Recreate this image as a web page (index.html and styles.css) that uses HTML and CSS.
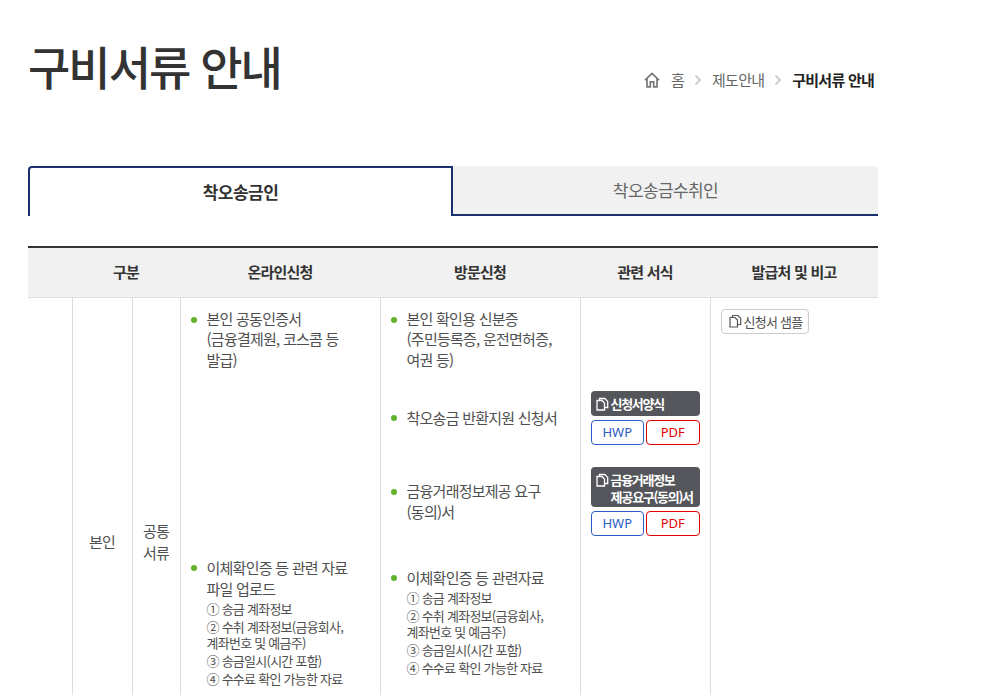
FILE: index.html
```html
<!DOCTYPE html>
<html lang="ko">
<head>
<meta charset="utf-8">
<title>구비서류 안내</title>
<link rel="stylesheet" href="styles.css">
</head>
<body>
<div class="page">
  <header class="head">
    <h1 class="title">구비서류 안내</h1>
    <nav class="crumbs">
      <svg class="home" viewBox="0 0 16 16" width="16" height="16"><path d="M1 8.200 8 1.400 15 8.200M3 6.600V14.800H6.300V9.800H9.700V14.800H13V6.600" fill="none" stroke="#777" stroke-width="1.700"/></svg>
      <span class="crumb">홈</span>
      <svg class="sep" viewBox="0 0 8 12" width="8" height="12"><path d="M1.500 1.500 6 6 1.500 10.500" fill="none" stroke="#ccc" stroke-width="1.800"/></svg>
      <span class="crumb">제도안내</span>
      <svg class="sep" viewBox="0 0 8 12" width="8" height="12"><path d="M1.500 1.500 6 6 1.500 10.500" fill="none" stroke="#ccc" stroke-width="1.800"/></svg>
      <span class="crumb current">구비서류 안내</span>
    </nav>
  </header>

  <div class="tabs">
    <div class="tab active">착오송금인</div>
    <div class="tab">착오송금수취인</div>
  </div>

  <table class="docs">
    <colgroup>
      <col class="c1"><col class="c2"><col class="c3"><col class="c4"><col class="c5"><col class="c6"><col class="c7">
    </colgroup>
    <thead>
      <tr>
        <th></th>
        <th colspan="2">구분</th>
        <th>온라인신청</th>
        <th>방문신청</th>
        <th>관련 서식</th>
        <th>발급처 및 비고</th>
      </tr>
    </thead>
    <tbody>
      <tr>
        <td class="ctr"></td>
        <td class="ctr">본인</td>
        <td class="ctr">공통<br>서류</td>
        <td class="top">
          <ul class="list online">
            <li class="item gap-a">본인 공동인증서<br>(금융결제원, 코스콤 등<br>발급)</li>
            <li class="item">이체확인증 등 관련 자료<br>파일 업로드
              <ol class="sub">
                <li>① 송금 계좌정보</li>
                <li>② 수취 계좌정보(금융회사,<br>계좌번호 및 예금주)</li>
                <li>③ 송금일시(시간 포함)</li>
                <li>④ 수수료 확인 가능한 자료</li>
              </ol>
            </li>
          </ul>
        </td>
        <td class="top">
          <ul class="list visit">
            <li class="item gap-b">본인 확인용 신분증<br>(주민등록증, 운전면허증,<br>여권 등)</li>
            <li class="item gap-c">착오송금 반환지원 신청서</li>
            <li class="item gap-d">금융거래정보제공 요구<br>(동의)서</li>
            <li class="item">이체확인증 등 관련자료
              <ol class="sub tight">
                <li>① 송금 계좌정보</li>
                <li>② 수취 계좌정보(금융회사,<br>계좌번호 및 예금주)</li>
                <li>③ 송금일시(시간 포함)</li>
                <li>④ 수수료 확인 가능한 자료</li>
              </ol>
            </li>
          </ul>
        </td>
        <td class="top forms">
          <div class="form">
            <div class="form-name">
              <svg class="copy" viewBox="0 0 14 14" width="14" height="14"><path d="M4.500 3.500V1.500H9.800L12.700 4.400V10.500H9.500M2 3.500H7L9.500 6V13H2Z" fill="none" stroke="#fff" stroke-width="1.300"/></svg>
              <span class="form-text">신청서양식</span>
            </div>
            <div class="btns"><a class="btn hwp">HWP</a><a class="btn pdf">PDF</a></div>
          </div>
          <div class="form">
            <div class="form-name">
              <svg class="copy" viewBox="0 0 14 14" width="14" height="14"><path d="M4.500 3.500V1.500H9.800L12.700 4.400V10.500H9.500M2 3.500H7L9.500 6V13H2Z" fill="none" stroke="#fff" stroke-width="1.300"/></svg>
              <span class="form-text">금융거래정보<br>제공 요구(동의)서</span>
            </div>
            <div class="btns"><a class="btn hwp">HWP</a><a class="btn pdf">PDF</a></div>
          </div>
        </td>
        <td class="top note">
          <a class="sample">
            <svg class="copy" viewBox="0 0 14 14" width="14" height="14"><path d="M4.500 3.500V1.500H9.800L12.700 4.400V10.500H9.500M2 3.500H7L9.500 6V13H2Z" fill="none" stroke="#555" stroke-width="1.200"/></svg>
            신청서 샘플
          </a>
        </td>
      </tr>
    </tbody>
  </table>
</div>
</body>
</html>
```

FILE: styles.css
```css
* { box-sizing: border-box; }
html, body { margin: 0; padding: 0; height: 695px; overflow: hidden; background: #fff; }
body { font-family: "Noto Sans CJK KR", "Noto Sans", sans-serif; color: #4f4f4f; font-size: 15px; letter-spacing: -0.05em; }
.page { width: 850px; margin-left: 28px; }

.head { display: flex; justify-content: space-between; align-items: flex-end; height: 166px; padding: 34px 4px 76px 0; }
.title { margin: 0 0 -5px; font-size: 46px; font-weight: 500; line-height: 60px; letter-spacing: -2px; color: #333; }
.crumbs { display: flex; align-items: center; font-size: 15px; line-height: 20px; color: #666; }
.home { margin-right: 11px; }
.sep { margin: 0 10px; }
.current { color: #222; font-weight: 700; }

.tabs { display: flex; height: 50px; }
.tab { flex: 1; display: flex; align-items: center; justify-content: center; padding-bottom: 1px; background: #f1f1f1; border-bottom: 2px solid #1a2f6e; border-radius: 0 4px 0 0; font-size: 17px; color: #666; letter-spacing: -0.6px; }
.tab.active { flex: 0 0 425px; padding-bottom: 1px; background: #fff; border: 2px solid #1a2f6e; border-bottom: 0; border-radius: 4px 0 0 0; color: #333; font-weight: 700; letter-spacing: -0.5px; }

.docs { width: 850px; margin-top: 30px; border-collapse: collapse; table-layout: fixed; border-top: 2px solid #333; }
.c1 { width: 44px; } .c2 { width: 60px; } .c3 { width: 48px; } .c4 { width: 200px; } .c5 { width: 200px; } .c6 { width: 130px; } .c7 { width: 168px; }
th { height: 50px; padding: 0 0 2px; background: #f1f1f1; border-bottom: 1px solid #ddd; font-size: 15px; font-weight: 700; color: #333; }
td { height: 490px; padding: 0; border-left: 1px solid #ddd; }
td:first-child { border-left: 0; }
.ctr { text-align: center; line-height: 22px; }
.top { vertical-align: top; }

.list { list-style: none; margin: 0; padding: 11px 10px 0 26px; }
.item { position: relative; line-height: 21px; }
.item::before { content: ""; position: absolute; left: -16px; top: 8px; width: 6px; height: 6px; border-radius: 50%; background: #62b32c; }
.gap-a { line-height: 20.600px; margin-bottom: 187px; }
.gap-b { line-height: 20.600px; margin-bottom: 37px; }
.gap-c { margin-bottom: 53px; }
.gap-d { line-height: 20.600px; margin-bottom: 45px; }
.sub { list-style: none; margin: 2px 0 0; padding: 0; font-size: 13px; line-height: 16px; }
.sub li { margin-bottom: 2px; }
.sub.tight { margin-top: 2px; }

.forms { padding: 93px 10px 0; }
.form { margin-bottom: 22px; }
.form-name { display: flex; align-items: flex-start; gap: 2px; min-height: 25px; padding: 4px 4px 2px; background: #55565b; border-radius: 4px; color: #fff; font-size: 13px; line-height: 17px; font-weight: 700; letter-spacing: -1.300px; word-spacing: -2px; }
.form-name .copy { flex: none; margin-top: 2px; }
.form-text { white-space: nowrap; }
.btns { display: flex; gap: 2px; margin-top: 4px; }
.btn { flex: 1; height: 25px; display: flex; align-items: center; justify-content: center; border-radius: 4px; background: #fff; font-size: 13px; letter-spacing: 0; word-spacing: 0; font-family: "Noto Sans", sans-serif; }
.hwp { border: 1px solid #2c5cc5; color: #2c5cc5; }
.pdf { border: 1px solid #e60000; color: #e60000; }

.note { padding: 11px 10px 0; }
.sample { display: inline-flex; align-items: center; gap: 2px; height: 25px; padding: 0 6px 0 6px; border: 1px solid #ccc; border-radius: 4px; font-size: 13px; color: #4f4f4f; }
```
